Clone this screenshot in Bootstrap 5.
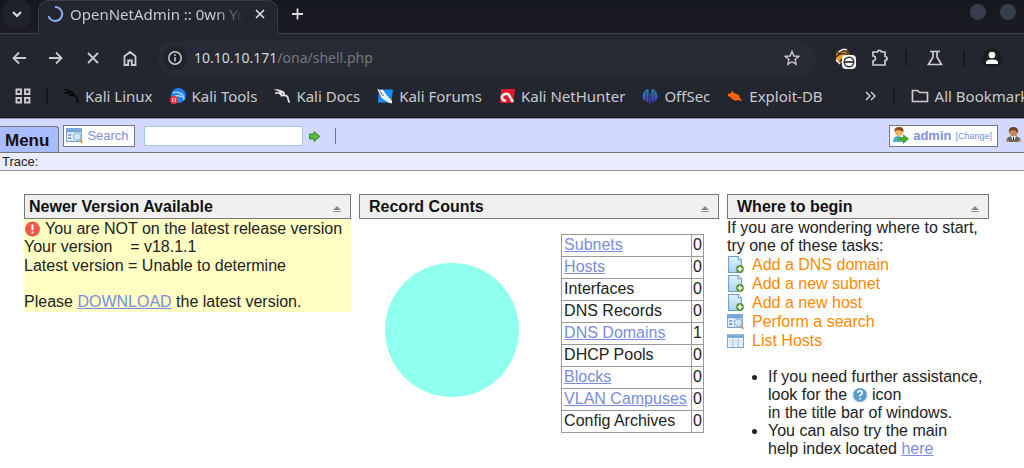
<!DOCTYPE html>
<html lang="en">
<head>
<meta charset="utf-8">
<meta name="viewport" content="width=device-width, initial-scale=1">
<title>OpenNetAdmin :: 0wn Your Network</title>
<link href="https://cdn.jsdelivr.net/npm/bootstrap@5.3.0/dist/css/bootstrap.min.css" rel="stylesheet">
<style>
body{font-family:"Liberation Sans",Arial,sans-serif;font-size:16px;line-height:18px;color:#222;background:#fff;overflow-x:hidden}
a{color:#7b8ce0}
svg{flex:none;display:block}
button{padding:0;border:0;background:none;color:inherit}
.browser{font-family:"Noto Sans",sans-serif;font-size:15px;line-height:20px;color:#c8cace;background:#24262f;overflow:hidden;border-bottom:1px solid #17181d}
.tabstrip{height:34px;background:linear-gradient(#15171f,#1b1b23);border-bottom:1px solid #3a3b45;padding-left:3px}
.tabmenu{width:28px;height:28px;background:#20222b;border-radius:10px}
.tab{width:240px;height:34px;margin-left:7px;padding:0 12px 7px 7px;background:#24262f;border:1px solid #3a3b45;border-bottom:0;border-radius:10px 10px 0 0;gap:6px}
.tabname{width:178px;white-space:nowrap;overflow:hidden;-webkit-mask-image:linear-gradient(90deg,#000 145px,transparent 174px);mask-image:linear-gradient(90deg,#000 145px,transparent 174px)}
.newtab{margin:8px 0 0 14px}
.wdot{width:16px;height:16px;border-radius:50%;background:#383d4b}
.tools{height:48px;padding-left:11px}
.navs{gap:21px}
.address{height:35px;margin-left:20px;background:#282b36;border-radius:18px;padding:0 16px 0 5px;gap:7px;font-size:14px}
.url{color:#74777f}
.host{color:#d4d5d9}
.siteinfo{width:24px;height:24px;border-radius:50%;background:#21232b}
.sep{width:2px;height:16px;background:#17181f;flex:none}
.marks{height:35px;padding:0 0 8px 15px;white-space:nowrap}
.marks a{color:#c8cace;text-decoration:none;gap:6px}
.marklist{gap:17px;margin-left:15px}
.menubar{height:35px;background:#d1d9ff;border-top:1px solid #8f93a5;border-bottom:1px solid #777;gap:4px;padding-right:3px}
.menubtn{height:26px;padding:2px 9px 0 5px;font-weight:bold;font-size:17px;color:#111;background:#a9bcff;border:1px solid #777;border-left:0;border-bottom:0;border-radius:0 3px 0 0}
.boxbtn{height:22px;border:1px solid #777;background:#fff;color:#8090e0;font-size:13px;line-height:16px;padding:0 5px 0 2px;gap:4px;text-decoration:none}
.find{width:159px;height:20px;border:1px solid #a5c9df;background:#fff;padding:0 3px;margin:0 2px 0 5px;font-size:13px}
.bar{width:1px;height:16px;background:#777;margin-left:10px}
.chg{font-size:9px}
.trace{height:18px;background:#ebedff;border-bottom:1px solid #999;font-size:13px;line-height:18px;padding-left:2px}
.board{padding:23px 35px 8px 24px}
.wide1{flex:327 1 0}.wide2{flex:360 1 0}.wide3{flex:262 1 0}
.wide1,.wide2,.wide3{min-width:0}
.head{height:25px;border:1px solid #777;background:#f0f0f0;padding:0 9px;font-size:16px;line-height:18px;font-weight:bold;color:#111}
.wide1 .head{padding-left:4px}
.notice{background:#ffffc4;white-space:nowrap;padding-bottom:1px}
.notice p,.tasks li{line-height:19px;height:19px;margin:0}
.tasks li{gap:8px}
.tasks a{color:#ff8a00;text-decoration:none}
.pie{width:134px;height:134px;border-radius:50%;background:#8fffee;margin:44px 0 0 26px;flex:none}
.counts{margin:15px 15px 0 0;border-collapse:collapse;white-space:nowrap}
.counts th,.counts td{border:1px solid #999;padding:1px 1px 2px;font-weight:normal;text-align:left;line-height:18px}
.counts th{min-width:130px;padding-left:2px}
.help{padding-left:41px;margin:18px 0 0;white-space:nowrap}
.pre{white-space:pre}
</style>
<script src="https://cdn.jsdelivr.net/npm/bootstrap@5.3.0/dist/js/bootstrap.bundle.min.js"></script>
</head>
<body>
<svg class="position-absolute" width="0" height="0" aria-hidden="true">
 <defs>
  <linearGradient id="gb" x2="0" y2="1"><stop stop-color="#e4f3fd"/><stop offset="1" stop-color="#a8d4f4"/></linearGradient>
  <linearGradient id="go" x2="0" y2="1"><stop stop-color="#1b8fb0"/><stop offset="1" stop-color="#5a2fd0"/></linearGradient>
 </defs>
 <symbol id="dragon" viewBox="0 0 16 16"><path d="M0 1l6 1 4 2 1 3-3-2-5 0 4-1-6-2z" fill="currentColor"/><path d="M1 5l7 0M3 2l6 2q2 2 0 3.500 5-.5 5 3 0 1 1.500 4M9 7.500q-3 0-3-3" fill="none" stroke="currentColor" stroke-width="1.700"/></symbol>
 <symbol id="pageadd" viewBox="0 0 16 16"><path d="M1.500.5h9l3 3v12h-12z" fill="url(#gb)" stroke="#6f9fd0"/><path d="M10.500.5v3h3" fill="#fff" stroke="#6f9fd0"/><circle cx="12.200" cy="12.200" r="3.700" fill="#5b9a3c"/><path d="M12.200 10v4.400M10 12.200h4.400" stroke="#fff" stroke-width="1.500"/></symbol>
 <symbol id="finder" viewBox="0 0 16 16"><path d="M.5 1.500h14v12H.5z" fill="#edf5fc" stroke="#7da5cf"/><path d="M1 2h13v3H1z" fill="#73a3da"/><path d="M2 7.500h3M2 10.500h3M6.500 7.500h3M6.500 10.500h2" stroke="#6592c5" stroke-width="1.500"/><circle cx="10.500" cy="9" r="3.500" fill="#cce8fa" stroke="#92b6d4"/><path d="M13 12l2.500 3" stroke="#e09a50" stroke-width="2"/></symbol>
 <symbol id="listing" viewBox="0 0 16 16"><path d="M.5 2.500h15v12H.5z" fill="#f1f8fd" stroke="#7da5cf"/><path d="M1 3h14v2.500H1z" fill="#73a3da"/><path d="M5.500 6v8M10.500 6v8" stroke="#91b9dc"/><path d="M2 7.500h12M2 9.500h12M2 11.500h12" stroke="#c8dced"/></symbol>
 <symbol id="up" viewBox="0 0 8 6"><path d="M4 0l4 4H0z" fill="#888"/><path d="M0 5.500h8" stroke="#999"/></symbol>
</svg>

<header class="browser">
 <div class="tabstrip d-flex align-items-start">
  <button class="tabmenu d-flex align-items-center justify-content-center" aria-label="Search tabs"><svg width="10" height="8" viewBox="0 0 10 8"><path d="M1 2l4 4 4-4" fill="none" stroke="#ddd" stroke-width="2"/></svg></button>
  <div class="tab d-flex align-items-center">
   <svg width="18" height="18" viewBox="0 0 18 18"><path d="M9 2a7 7 0 1 1-6.500 9" fill="none" stroke="#8ab0f0" stroke-width="2"/></svg>
   <span class="tabname">OpenNetAdmin :: 0wn Yo</span>
   <button class="ms-auto" aria-label="Close tab"><svg width="10" height="10" viewBox="0 0 10 10"><path d="M1 1l8 8M9 1L1 9" stroke="#ddd" stroke-width="1.700"/></svg></button>
  </div>
  <button class="newtab" aria-label="New tab"><svg width="11" height="12" viewBox="0 0 11 11"><path d="M5.500 0v11M0 5.500h11" stroke="#ddd" stroke-width="1.800"/></svg></button>
  <div class="ms-auto d-flex mt-1 me-2" style="gap:14px"><span class="wdot"></span><span class="wdot"></span></div>
 </div>
 <div class="tools d-flex align-items-center">
  <div class="navs d-flex">
   <button aria-label="Back"><svg width="16" height="16" viewBox="0 0 16 16"><path d="M15 8H3M8 2.500L2.500 8 8 13.500" fill="none" stroke="#ccc" stroke-width="1.800"/></svg></button>
   <button aria-label="Forward"><svg width="16" height="16" viewBox="0 0 16 16"><path d="M1 8h12M8 2.500L13.500 8 8 13.500" fill="none" stroke="#ccc" stroke-width="1.800"/></svg></button>
   <button aria-label="Stop"><svg width="16" height="16" viewBox="0 0 16 16"><path d="M3 3l10 10M13 3L3 13" stroke="#ccc" stroke-width="1.800"/></svg></button>
   <button aria-label="Home"><svg width="16" height="16" viewBox="0 0 16 16"><path d="M2.500 6.300L8 2l5.500 4.300V15H9.800v-4.500H6.200V15H2.500z" fill="none" stroke="#ccc" stroke-width="1.800"/></svg></button>
  </div>
  <div class="address d-flex align-items-center flex-grow-1">
   <span class="siteinfo d-flex align-items-center justify-content-center"><svg width="14" height="14" viewBox="0 0 14 14"><circle cx="7" cy="7" r="6.200" fill="none" stroke="#ccc" stroke-width="1.500"/><path d="M7 6v4.500M7 3.300v1.600" stroke="#ccc" stroke-width="1.500"/></svg></span>
   <a href="#" class="url text-decoration-none flex-grow-1"><span class="host">10.10.10.171</span>/ona/shell.php</a>
   <button aria-label="Bookmark this page"><svg width="16" height="16" viewBox="0 0 16 16"><path d="M8 1.500l1.900 4.500 4.800.4-3.600 3.200 1.100 4.700L8 11.700l-4.200 2.600 1.100-4.700L1.300 6.400 6.100 6z" fill="none" stroke="#ccc" stroke-width="1.400"/></svg></button>
  </div>
  <button class="ms-3" aria-label="Proxy extension"><svg width="26" height="24" viewBox="0 0 26 24"><path d="M4 9q1-5 8-6l5 3 1 6-6 6-8-3z" fill="#f39a20"/><path d="M6 8q3-4 8-3l3 3M4 11q5-6 12-2M8 16q2-5 8-4" fill="none" stroke="#3b2d20" stroke-width="1.500"/><path d="M7 6q4-4 8-2M4 14l4 4" fill="none" stroke="#eee" stroke-width="1.500"/><rect x="10" y="9" width="14" height="14" rx="4" fill="#fff"/><circle cx="17" cy="16" r="4.800" fill="none" stroke="#333" stroke-width="1.500"/><path d="M13 16h8" stroke="#333" stroke-width="1.800"/></svg></button>
  <button style="margin-left:13px" aria-label="Extensions"><svg width="18" height="18" viewBox="0 0 18 18"><path d="M2 3h4.500a2 1.700 0 0 1 4 0H14v4.500a2 2 0 0 1 0 4V16H2v-4a2.500 2.500 0 0 0 0-5z" fill="none" stroke="#ccc" stroke-width="1.700"/></svg></button>
  <span class="sep ms-3"></span>
  <button style="margin-left:20px" aria-label="Labs"><svg width="16" height="16" viewBox="0 0 16 16"><path d="M3 1.500h10M6 2v5L1.500 14.500h13L10 7V2" fill="none" stroke="#ccc" stroke-width="1.700"/></svg></button>
  <span class="sep" style="margin-left:20px"></span>
  <button style="margin:0 22px 0 17px" aria-label="Profile"><svg width="20" height="20" viewBox="0 0 20 20"><circle cx="10" cy="10" r="10" fill="#1b1c20"/><circle cx="10" cy="7" r="3.300" fill="#fff"/><path d="M4 16v-1.500q0-3 6-3t6 3V16z" fill="#fff"/></svg></button>
 </div>
 <nav class="marks d-flex align-items-center" aria-label="Bookmarks">
  <button aria-label="Apps"><svg width="16" height="16" viewBox="0 0 16 16"><path d="M1.500 1.500h4.500v4.500H1.500zM10 1.500h4.500v4.500H10zM1.500 10h4.500v4.500H1.500zM10 10h4.500v4.500H10z" fill="none" stroke="#ccc" stroke-width="1.900"/></svg></button>
  <span class="sep" style="margin-left:15px"></span>
  <div class="marklist d-flex">
   <a href="#" class="d-flex align-items-center"><svg width="16" height="16" style="color:#090a0d"><use href="#dragon"/></svg>Kali Linux</a>
   <a href="#" class="d-flex align-items-center"><svg width="16" height="16" viewBox="0 0 16 16"><circle cx="8.500" cy="7.500" r="7.500" fill="#1d80ee"/><path d="M3 5q4-2 9 1 2 3 2 6M5 8q3-1 7 1" fill="none" stroke="#9fd0ff" stroke-width="1.600"/><circle cx="4" cy="12" r="4" fill="#e83543"/><path d="M2.800 10v4M5.300 10v4" stroke="#ffd0d0"/></svg>Kali Tools</a>
   <a href="#" class="d-flex align-items-center"><svg width="16" height="16" style="color:#e8e8e8"><use href="#dragon"/></svg>Kali Docs</a>
   <a href="#" class="d-flex align-items-center"><svg width="16" height="16" viewBox="0 0 17 16"><path d="M2 1h15l-2 14H1z" fill="#168cf8"/><path d="M0 0l3 2 3-1 5 7 5 5 0 3-4-1-7-5-2-4z" fill="#f3f3ee"/><path d="M3 3l4 5" stroke="#555"/></svg>Kali Forums</a>
   <a href="#" class="d-flex align-items-center"><svg width="16" height="16" viewBox="0 0 16 16"><path d="M2 1h14l-2 14H1z" fill="#e5162d"/><path d="M7 13l-3-1q-3-4 2-6 4-1 5 3l3 5" fill="none" stroke="#eee" stroke-width="2.600"/></svg>Kali NetHunter</a>
   <a href="#" class="d-flex align-items-center"><svg width="16" height="16" viewBox="0 0 16 16"><path d="M6.500 1v13Q0 13 .5 8 1 2 6.500 1zM9.500 1v13Q16 13 15.500 8 15 2 9.500 1zM7.500 5h1v11h-1z" fill="url(#go)"/><path d="M4 3v10M12 3v10" stroke="#24304c"/></svg>OffSec</a>
   <a href="#" class="d-flex align-items-center"><svg width="16" height="16" viewBox="0 0 16 16"><path d="M1 6l3-1 1-2 2 2 5 2 1 3 2 3-5-1-1 1-4-2-2-2-2-1z" fill="#ff6508"/></svg>Exploit-DB</a>
  </div>
  <button style="margin-left:42px" aria-label="More bookmarks"><svg width="11" height="10" viewBox="0 0 11 10"><path d="M1 1l4 4-4 4M6 1l4 4-4 4" fill="none" stroke="#ccc" stroke-width="1.500"/></svg></button>
  <span class="sep" style="margin-left:17px"></span>
  <a href="#" class="d-flex align-items-center ms-3"><svg width="18" height="14" viewBox="0 0 18 14"><path d="M1.500 1.500h5l2 2h8v9h-15z" fill="none" stroke="#ccc" stroke-width="1.700"/></svg>All Bookmarks</a>
 </nav>
</header>

<div class="menubar d-flex align-items-center">
 <button class="menubtn align-self-end">Menu</button>
 <button class="boxbtn d-flex align-items-center"><svg width="17" height="17"><use href="#finder"/></svg>Search</button>
 <input class="find" type="text" aria-label="Quick search">
 <button aria-label="Go"><svg width="12" height="12" viewBox="0 0 12 12"><path d="M.5 4H5V1.500l6 5-6 5V9H.5z" fill="#57b837" stroke="#398726"/></svg></button>
 <span class="bar"></span>
 <div class="boxbtn d-flex align-items-center ms-auto"><svg width="17" height="17" viewBox="0 0 17 17"><path d="M1 15q0-6 5-6t6 6z" fill="#52a7dd"/><circle cx="7" cy="5" r="4" fill="#edb36c"/><path d="M2.500 5Q2 0 7 0q5 0 4.500 5Q9 3 6 3q-2 0-3.500 2z" fill="#8b4a1d"/><path d="M6 10h5V7l6 5-6 5v-3H6z" fill="#4ba832"/></svg><b>admin</b><a href="#" class="chg text-decoration-none">[Change]</a></div>
 <button class="ms-1" aria-label="Log in"><svg width="15" height="17" viewBox="0 0 15 17"><path d="M0 15q0-6 7-6 8 0 8 6z" fill="#646464"/><path d="M5 9h5l-2.500 6z" fill="#fff"/><path d="M7.500 10v4" stroke="#333"/><circle cx="7.500" cy="5.500" r="4" fill="#c98958"/><path d="M3 6Q2 0 7.500 0T12 6Q10 3 7 3T3 6z" fill="#71431f"/><path d="M0 14h3M12 14h3" stroke="#d18b55" stroke-width="2"/></svg></button>
</div>
<div class="trace">Trace:</div>

<main class="board d-flex align-items-start gap-2">
 <section class="wide1">
  <h2 class="head d-flex align-items-center justify-content-between m-0">Newer Version Available<svg class="mt-1" width="8" height="6"><use href="#up"/></svg></h2>
  <div class="notice">
   <p class="d-flex align-items-center"><svg class="me-1" width="17" height="17" viewBox="0 0 17 17"><circle cx="8.500" cy="9" r="7.500" fill="#f0574a"/><path d="M8.500 4.500v5.500M8.500 11.500v2" stroke="#fff" stroke-width="2"/></svg>You are NOT on the latest release version</p>
   <div class="pre">Your version    = v18.1.1</div>
   <p>Latest version = Unable to determine</p>
   <div>&nbsp;</div>
   <div>Please <a href="#">DOWNLOAD</a> the latest version.</div>
  </div>
 </section>
 <section class="wide2">
  <h2 class="head d-flex align-items-center justify-content-between m-0">Record Counts<svg class="mt-1" width="8" height="6"><use href="#up"/></svg></h2>
  <div class="d-flex justify-content-between align-items-start">
   <div class="pie" role="img" aria-label="All records are DNS domains"></div>
   <table class="counts">
    <tbody>
     <tr><th scope="row"><a href="#">Subnets</a></th><td>0</td></tr>
     <tr><th scope="row"><a href="#">Hosts</a></th><td>0</td></tr>
     <tr><th scope="row">Interfaces</th><td>0</td></tr>
     <tr><th scope="row">DNS Records</th><td>0</td></tr>
     <tr><th scope="row"><a href="#">DNS Domains</a></th><td>1</td></tr>
     <tr><th scope="row">DHCP Pools</th><td>0</td></tr>
     <tr><th scope="row"><a href="#">Blocks</a></th><td>0</td></tr>
     <tr><th scope="row"><a href="#">VLAN Campuses</a></th><td>0</td></tr>
     <tr><th scope="row">Config Archives</th><td>0</td></tr>
    </tbody>
   </table>
  </div>
 </section>
 <section class="wide3">
  <h2 class="head d-flex align-items-center justify-content-between m-0">Where to begin<svg class="mt-1" width="8" height="6"><use href="#up"/></svg></h2>
  <div class="text-nowrap">If you are wondering where to start,<br>try one of these tasks:</div>
  <ul class="tasks list-unstyled m-0">
   <li class="d-flex align-items-center"><svg width="17" height="17"><use href="#pageadd"/></svg><a href="#">Add a DNS domain</a></li>
   <li class="d-flex align-items-center"><svg width="17" height="17"><use href="#pageadd"/></svg><a href="#">Add a new subnet</a></li>
   <li class="d-flex align-items-center"><svg width="17" height="17"><use href="#pageadd"/></svg><a href="#">Add a new host</a></li>
   <li class="d-flex align-items-center"><svg width="17" height="17"><use href="#finder"/></svg><a href="#">Perform a search</a></li>
   <li class="d-flex align-items-center"><svg width="17" height="17"><use href="#listing"/></svg><a href="#">List Hosts</a></li>
  </ul>
  <ul class="help">
   <li>If you need further assistance,<br>look for the <svg class="d-inline-block align-text-bottom" width="16" height="16" viewBox="0 0 16 16"><circle cx="8" cy="8" r="7" fill="#5c9bd0" stroke="#a9c8e2"/><path d="M5.800 6q0-2.200 2.200-2.200T10.200 6Q10 7.500 8 8.200V9.500M8 11v1.600" fill="none" stroke="#fff" stroke-width="1.600"/></svg> icon<br>in the title bar of windows.</li>
   <li>You can also try the main<br>help index located <a href="#">here</a></li>
  </ul>
 </section>
</main>
</body>
</html>
